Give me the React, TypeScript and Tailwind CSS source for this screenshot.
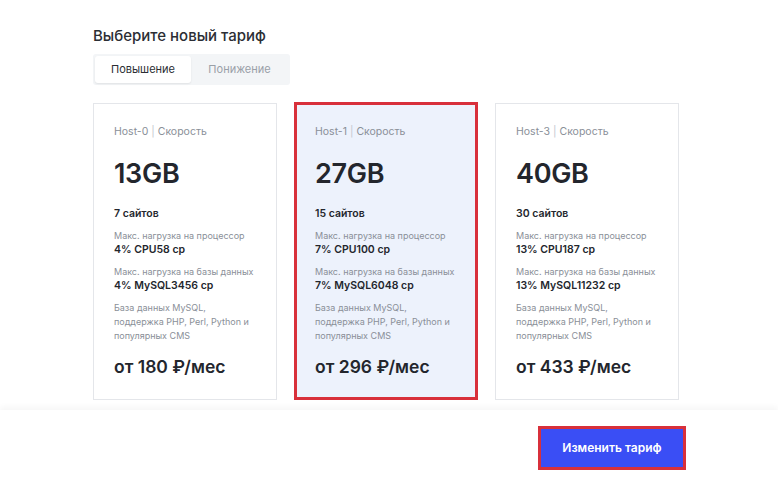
import React from "react";

type Plan = {
  name: string;
  size: string;
  sites: string;
  cpu: string;
  db: string;
  price: string;
  selected?: boolean;
};

const plans: Plan[] = [
  { name: "Host-0", size: "13GB", sites: "7 сайтов", cpu: "4% CPU58 ср", db: "4% MySQL3456 ср", price: "от 180 ₽/мес" },
  { name: "Host-1", size: "27GB", sites: "15 сайтов", cpu: "7% CPU100 ср", db: "7% MySQL6048 ср", price: "от 296 ₽/мес", selected: true },
  { name: "Host-3", size: "40GB", sites: "30 сайтов", cpu: "13% CPU187 ср", db: "13% MySQL11232 ср", price: "от 433 ₽/мес" },
];

const PlanCard = ({ plan }: { plan: Plan }) => (
  <div
    className={
      plan.selected
        ? "w-[184px] h-[298px] border-[3px] border-[#d8303b] bg-[#edf2fc] pl-[18px] pt-[20px] -mt-px"
        : "w-[184px] h-[297px] border border-[#e4e6ea] bg-white pl-[20px] pt-[21px]"
    }
  >
    <div className="text-[10.5px] leading-[14px] text-[#8a8f98]">
      {plan.name} <span className="text-[#c4c8cf]">|</span> Скорость
    </div>
    <div className="mt-[19px] text-[27px] leading-[32px] font-semibold text-[#23262d] tracking-[-0.3px]">
      {plan.size}
    </div>
    <div className="mt-[17px] text-[10.5px] leading-[14px] font-semibold text-[#23262d]">{plan.sites}</div>
    <div className="mt-[8px] text-[9px] leading-[13px] text-[#8a8f98]">Макс. нагрузка на процессор</div>
    <div className="mt-[1px] text-[10.5px] leading-[14px] font-semibold text-[#23262d]">{plan.cpu}</div>
    <div className="mt-[8px] text-[9px] leading-[13px] text-[#8a8f98]">Макс. нагрузка на базы данных</div>
    <div className="mt-[1px] text-[10.5px] leading-[14px] font-semibold text-[#23262d]">{plan.db}</div>
    <div className="mt-[8px] text-[9px] leading-[14px] text-[#8a8f98]">
      База данных MySQL,
      <br />
      поддержка PHP, Perl, Python и
      <br />
      популярных CMS
    </div>
    <div className="mt-[13px] text-[17.5px] leading-[22px] font-semibold text-[#23262d]">{plan.price}</div>
  </div>
);

export default function App() {
  return (
    <div className="w-[778px] h-[484px] bg-white flex flex-col font-['Inter',sans-serif] overflow-hidden">
      <div className="pl-[93px] pt-[26px] h-[410px]">
        <h2 className="text-[15px] leading-[20px] font-medium text-[#2b2e34]">Выберите новый тариф</h2>
        <div className="mt-[8px] flex w-[197px] h-[31px] bg-[#f3f5f7] rounded-[3px] p-[2px]">
          <div className="w-[96px] flex items-center justify-center bg-white rounded-[3px] shadow-[0_1px_2px_rgba(0,0,0,0.08)] text-[11px] text-[#2b2e34]">
            Повышение
          </div>
          <div className="flex-1 flex items-center justify-center text-[11px] text-[#9aa0a8]">Понижение</div>
        </div>
        <div className="mt-[18px] flex gap-[17px] items-start">
          {plans.map((p) => (
            <PlanCard key={p.name} plan={p} />
          ))}
        </div>
      </div>
      <div className="flex-1 bg-white shadow-[0_-3px_6px_rgba(0,0,0,0.04)] flex justify-end pr-[92px] pt-[16px]">
        <button className="w-[148px] h-[44px] border-[3px] border-[#d8303b] bg-[#3a4ef5] text-white text-[12px] font-semibold">
          Изменить тариф
        </button>
      </div>
    </div>
  );
}
